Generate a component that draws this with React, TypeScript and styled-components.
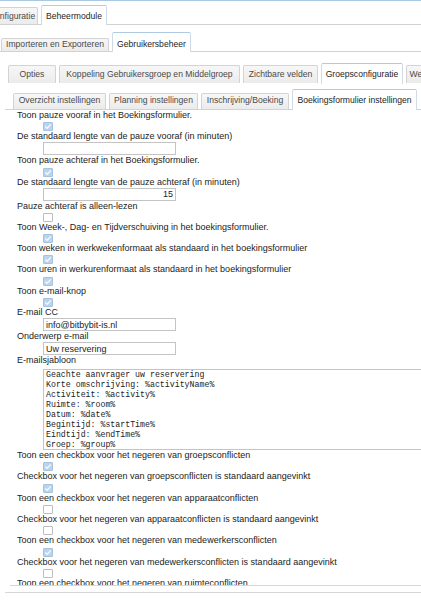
import styled, { createGlobalStyle, css } from 'styled-components';

type TabItem = { label: string; width: number };

type FieldItem =
  | { kind: 'check'; label: string; checked: boolean }
  | { kind: 'input'; label: string; value: string; align?: 'left' | 'right' }
  | { kind: 'template'; label: string; value: string };

const emailTemplate = [
  'Geachte aanvrager uw reservering',
  'Korte omschrijving: %activityName%',
  'Activiteit: %activity%',
  'Ruimte: %room%',
  'Datum: %date%',
  'Begintijd: %startTime%',
  'Eindtijd: %endTime%',
  'Groep: %group%',
].join('\n');

const fields: FieldItem[] = [
  { kind: 'check', label: 'Toon pauze vooraf in het Boekingsformulier.', checked: true },
  { kind: 'input', label: 'De standaard lengte van de pauze vooraf (in minuten)', value: '' },
  { kind: 'check', label: 'Toon pauze achteraf in het Boekingsformulier.', checked: true },
  { kind: 'input', label: 'De standaard lengte van de pauze achteraf (in minuten)', value: '15', align: 'right' },
  { kind: 'check', label: 'Pauze achteraf is alleen-lezen', checked: false },
  { kind: 'check', label: 'Toon Week-, Dag- en Tijdverschuiving in het boekingsformulier.', checked: true },
  { kind: 'check', label: 'Toon weken in werkwekenformaat als standaard in het boekingsformulier', checked: true },
  { kind: 'check', label: 'Toon uren in werkurenformaat als standaard in het boekingsformulier', checked: true },
  { kind: 'check', label: 'Toon e-mail-knop', checked: true },
  { kind: 'input', label: 'E-mail CC', value: 'info@bitbybit-is.nl' },
  { kind: 'input', label: 'Onderwerp e-mail', value: 'Uw reservering' },
  { kind: 'template', label: 'E-mailsjabloon', value: emailTemplate },
  { kind: 'check', label: 'Toon een checkbox voor het negeren van groepsconflicten', checked: true },
  { kind: 'check', label: 'Checkbox voor het negeren van groepsconflicten is standaard aangevinkt', checked: true },
  { kind: 'check', label: 'Toon een checkbox voor het negeren van apparaatconflicten', checked: false },
  { kind: 'check', label: 'Checkbox voor het negeren van apparaatconflicten is standaard aangevinkt', checked: false },
  { kind: 'check', label: 'Toon een checkbox voor het negeren van medewerkersconflicten', checked: true },
  { kind: 'check', label: 'Checkbox voor het negeren van medewerkersconflicten is standaard aangevinkt', checked: false },
  { kind: 'check', label: 'Toon een checkbox voor het negeren van ruimteconflicten', checked: false },
  { kind: 'check', label: 'Checkbox voor het negeren van ruimteconflicten is standaard aangevinkt', checked: false },
];

type TabStripProps = {
  tabs: TabItem[];
  active: number;
  offset: number;
  height: number;
  pad: [number, number];
  activePad: [number, number];
  line?: boolean;
};

const TabStrip = ({ tabs, active, offset, height, pad, activePad, line = true }: TabStripProps): JSX.Element => (
  <TabNav $offset={offset} $height={height} $line={line}>
    {tabs.map((tab, i) => {
      const isActive = i === active;
      const [pt, pb] = isActive ? activePad : pad;
      return (
        <Tab key={tab.label} $active={isActive} $w={tab.width} $pt={pt} $pb={pb}>
          {tab.label}
        </Tab>
      );
    })}
  </TabNav>
);

const CheckMark = (): JSX.Element => (
  <svg width="8" height="7" viewBox="0 0 8 7">
    <polyline points="1.3,3.4 3.2,5.3 6.8,1.4" fill="none" stroke="#f4f8fc" strokeWidth="1.4" />
  </svg>
);

const App = (): JSX.Element => {
  return (
    <Root>
      <GlobalStyle />
      <TabStrip
        tabs={[
          { label: 'Configuratie', width: 52 },
          { label: 'Beheermodule', width: 66 },
        ]}
        active={1}
        offset={-14}
        height={23}
        pad={[3, 2]}
        activePad={[5, 3]}
      />
      <Panel $top={7}>
        <TabStrip
          tabs={[
            { label: 'Importeren en Exporteren', width: 108 },
            { label: 'Gebruikersbeheer', width: 79 },
          ]}
          active={1}
          offset={1}
          height={19}
          pad={[0, 1]}
          activePad={[6, 2]}
        />
        <Panel $top={11}>
          <SubPanel $indent={5} $bottom={6}>
            <TabStrip
              tabs={[
                { label: 'Opties', width: 48 },
                { label: 'Koppeling Gebruikersgroep en Middelgroep', width: 181 },
                { label: 'Zichtbare velden', width: 75 },
                { label: 'Groepsconfiguratie', width: 82 },
                { label: 'Webservices', width: 56 },
              ]}
              active={3}
              offset={3}
              height={20}
              pad={[3, 3]}
              activePad={[5, 4]}
              line={false}
            />
            <Panel $top={5}>
              <TabStrip
                tabs={[
                  { label: 'Overzicht instellingen', width: 93 },
                  { label: 'Planning instellingen', width: 89 },
                  { label: 'Inschrijving/Boeking', width: 88 },
                  { label: 'Boekingsformulier instellingen', width: 125 },
                ]}
                active={3}
                offset={8}
                height={20}
                pad={[1, 3]}
                activePad={[5, 4]}
              />
              <Form>
                {fields.map((field) => (
                  <div key={field.label}>
                    <Label>{field.label}</Label>
                    {field.kind === 'check' && (
                      <CheckRow>
                        <CheckBox $checked={field.checked}>{field.checked && <CheckMark />}</CheckBox>
                      </CheckRow>
                    )}
                    {field.kind === 'input' && (
                      <TextInput type="text" value={field.value} $align={field.align ?? 'left'} readOnly />
                    )}
                    {field.kind === 'template' && <Template value={field.value} readOnly />}
                  </div>
                ))}
              </Form>
            </Panel>
          </SubPanel>
        </Panel>
      </Panel>
    </Root>
  );
};

export default App;

const GlobalStyle = createGlobalStyle`
  html, body {
    margin: 0;
    padding: 0;
    background: #fff;
    overflow: hidden;
  }

  body {
    font-family: "Liberation Sans", Arial, sans-serif;
    color: #222;
  }
`;

const Root = styled.div`
  width: 100%;
  height: 599px;
  overflow: hidden;
  border-top: 1px solid #a9c8e2;
`;

const TabNav = styled.ul<{ $offset: number; $height: number; $line: boolean }>`
  display: flex;
  align-items: flex-end;
  gap: 3px;
  height: ${(p) => p.$height}px;
  margin: 0;
  padding: 0;
  list-style: none;
  white-space: nowrap;
  border-bottom: 1px solid ${(p) => (p.$line ? '#d2d2d2' : 'transparent')};

  & > li:first-child {
    margin-left: ${(p) => p.$offset}px;
  }
`;

const Tab = styled.li<{ $active: boolean; $w: number; $pt: number; $pb: number }>`
  flex: none;
  box-sizing: border-box;
  width: ${(p) => p.$w}px;
  padding: ${(p) => p.$pt}px 0 ${(p) => p.$pb}px;
  border: 1px solid #d3d3d3;
  border-bottom: none;
  border-radius: 2px 2px 0 0;
  background: linear-gradient(#f7f7f7, #ebebeb);
  color: #4a4a4a;
  font-size: 8.6px;
  line-height: 11px;
  text-align: center;
  overflow: hidden;

  ${(p) =>
    p.$active &&
    css`
      margin-bottom: -1px;
      border-color: #cfdbe6;
      border-top-color: #aecbe4;
      background: #fff;
      color: #1e1e1e;
    `}
`;

const Panel = styled.div<{ $top: number }>`
  padding-top: ${(p) => p.$top}px;
`;

const SubPanel = styled.div<{ $indent: number; $bottom: number }>`
  margin-left: ${(p) => p.$indent}px;
  padding-bottom: ${(p) => p.$bottom}px;
  border-bottom: 1px solid #d6d6d6;
`;

const Form = styled.div`
  margin-left: 5px;
  padding-left: 7px;
  height: 475px;
  overflow: hidden;
  border-bottom: 1px solid #d6d6d6;
`;

const Label = styled.div`
  font-size: 9px;
  line-height: 11px;
  white-space: nowrap;
  color: #222;
`;

/* 9px box plus a little air above it: one check row is 10.3px tall */
const CheckRow = styled.div`
  height: 9px;
  padding: 1.3px 0 0 26px;
`;

const CheckBox = styled.span<{ $checked: boolean }>`
  display: flex;
  align-items: center;
  justify-content: center;
  box-sizing: border-box;
  width: 10px;
  height: 9px;
  border: 1px solid #bdbdbd;
  border-radius: 1px;
  background: #fff;

  ${(p) =>
    p.$checked &&
    css`
      border-color: #a6c2de;
      background: #bad4ee;
    `}
`;

const TextInput = styled.input<{ $align: 'left' | 'right' }>`
  display: block;
  box-sizing: border-box;
  width: 133px;
  height: 13px;
  margin: 0 0 0 26px;
  padding: 0 2px;
  border: 1px solid #c4c4c4;
  border-radius: 0;
  outline: none;
  background: #fff;
  font: 9px "Liberation Sans", Arial, sans-serif;
  color: #222;
  text-align: ${(p) => p.$align};
`;

const Template = styled.textarea`
  display: block;
  box-sizing: border-box;
  width: 420px;
  height: 81px;
  margin: 3px 0 0 26px;
  padding: 0 2px;
  border: 1px solid #c4c4c4;
  border-radius: 0;
  outline: none;
  resize: none;
  overflow: hidden;
  background: #fff;
  font: 8.25px/10px "Liberation Mono", "Courier New", monospace;
  color: #222;
`;
